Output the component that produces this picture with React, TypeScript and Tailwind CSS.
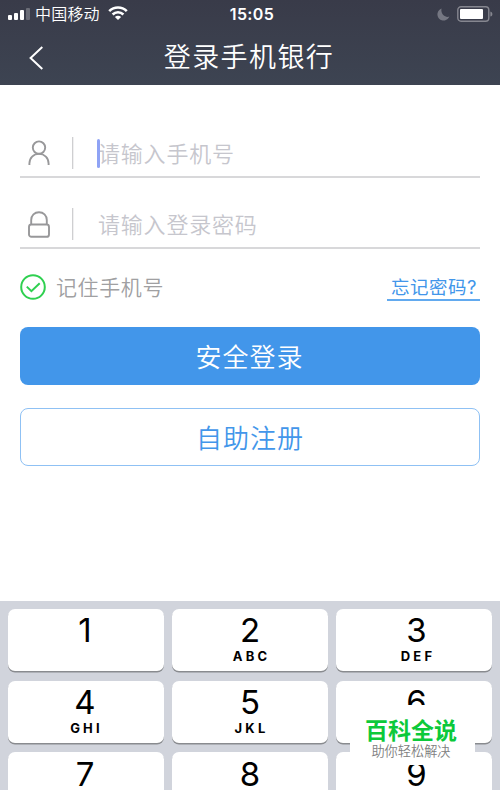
import { clsx } from 'clsx';

// The last row is cut by the bottom of the screen, so it only shows digits
const KEYS = [
    { digit: '1', letters: '' },
    { digit: '2', letters: 'ABC' },
    { digit: '3', letters: 'DEF' },
    { digit: '4', letters: 'GHI' },
    { digit: '5', letters: 'JKL' },
    { digit: '6', letters: '' },
    { digit: '7', letters: '' },
    { digit: '8', letters: '' },
    { digit: '9', letters: '' },
];

function StatusBar() {
    return (
        <div className="grid h-7 grid-cols-3 items-center pl-2 pr-[7px]">
            <div className="flex items-center">
                <svg width="22" height="12" viewBox="0 0 22 12" fill="white">
                    <rect x="0" y="7" width="4" height="5" rx="1" />
                    <rect x="6" y="5" width="4" height="7" rx="1" />
                    <rect x="12" y="2" width="4" height="10" rx="1" />
                    <rect x="18" y="0" width="4" height="12" rx="1" opacity="0.25" />
                </svg>
                <span className="-mt-0.5 ml-[5px] text-[16px] leading-7 font-[350] tracking-[0.2px]">中国移动</span>
                <svg className="-mt-0.5 ml-2" width="20" height="14" viewBox="0 0 20 14" fill="none" stroke="white" strokeWidth="2.6">
                    <path d="M1.2 5.1C6.2 0.2 13.8 0.2 18.8 5.1" />
                    <path d="M4.6 8.5C7.7 5.5 12.3 5.5 15.4 8.5" />
                    <path d="M6.9 10.9C8.7 9.2 11.3 9.2 13.1 10.9L10 14Z" fill="white" stroke="none" />
                </svg>
            </div>
            <span className="pl-[3px] text-center font-['Inter'] text-[16px] font-semibold tracking-[0.4px]">15:05</span>
            <div className="flex items-center justify-end">
                <svg width="13" height="13" viewBox="0 0 13 13" fill="#757782">
                    <path d="M4.6 0.5A6.2 6.2 0 1 0 12.4 8.6C8.2 10.2 3.2 5.8 4.6 0.5Z" />
                </svg>
                <svg className="ml-[7px]" width="36" height="16" viewBox="0 0 36 16">
                    <rect x="0.8" y="0.8" width="31" height="14.4" rx="3.2" fill="none" stroke="#85868f" strokeWidth="1.4" />
                    <rect x="3" y="3" width="23" height="10" rx="1" fill="white" />
                    <path d="M33.4 5.4C36 6.3 36 9.7 33.4 10.6Z" fill="#85868f" />
                </svg>
            </div>
        </div>
    );
}

function Field({ icon, placeholder, focused }: { icon: React.ReactNode; placeholder: string; focused?: boolean }) {
    return (
        <div className="flex h-12 items-center border-b-2 border-[#d8d8da]">
            <div className="flex w-[38px] justify-center">{icon}</div>
            <div className="ml-3.5 h-8 w-px bg-[#cfcfd1] shadow-[1px_0_0_#f0f0f1]" />
            <div className="relative ml-[25px] text-[22px] leading-8 font-[350] tracking-[0.8px] text-[#c6c6cd]">
                <span className="-mt-0.5 block">{placeholder}</span>
                {focused && <span className="absolute -left-px top-px h-[29px] w-[2.5px] rounded-full bg-[#8fa3f5]" />}
            </div>
        </div>
    );
}

export default function App() {
    return (
        <div className="relative flex h-[790px] w-[500px] flex-col overflow-hidden bg-white font-['Noto_Sans_CJK_SC','Noto_Sans',sans-serif]">
            <header className="h-[85px] shrink-0 bg-linear-to-b from-[#393b49] to-[#3d4452] text-white">
                <StatusBar />
                <div className="grid h-[57px] grid-cols-[60px_1fr_60px] items-center">
                    <svg className="ml-[29px] mt-0.5" width="15" height="24" viewBox="0 0 15 24" fill="none" stroke="white" strokeWidth="2">
                        <path d="M13.3 1L1.6 12L13.3 23" />
                    </svg>
                    <h1 className="-mt-0.5 pr-0.5 text-center text-[27px] leading-[57px] font-[350] tracking-[1.4px]">登录手机银行</h1>
                </div>
            </header>

            <main className="flex flex-1 flex-col px-5 pt-[45px]">
                <Field
                    focused
                    placeholder="请输入手机号"
                    icon={
                        <svg width="22" height="26" viewBox="0 0 22 26" fill="none" stroke="#98989a" strokeWidth="1.9">
                            <circle cx="11" cy="7.6" r="6.2" />
                            <path d="M1.4 25V23.6C1.4 17.8 5.5 13.9 11 13.9S20.6 17.8 20.6 23.6V25" />
                        </svg>
                    }
                />
                <div className="mt-[23px]">
                    <Field
                        placeholder="请输入登录密码"
                        icon={
                            <svg width="22" height="27" viewBox="0 0 22 27" fill="none" stroke="#98989a" strokeWidth="1.9">
                                <rect x="1" y="13.5" width="20" height="12.3" rx="2.4" />
                                <path d="M3.2 13.5V9C3.2 4.3 6.6 1.2 11 1.2S18.8 4.3 18.8 9V13.5" />
                            </svg>
                        }
                    />
                </div>

                <div className="mt-[22px] flex h-8 items-center justify-between">
                    <label className="flex items-center text-[21px] leading-8 font-[350] tracking-[0.6px] text-[#a0a0a2]">
                        <svg className="mr-2.5" width="26" height="26" viewBox="0 0 26 26" fill="none" stroke="#2fd050" strokeWidth="2">
                            <circle cx="13" cy="13" r="11.8" />
                            <path d="M6.8 12.6L11.4 17.2L19.7 9.2" />
                        </svg>
                        <span className="-mt-0.5">记住手机号</span>
                    </label>
                    <a className="h-[27px] border-b-2 border-[#62aaef] pl-1 pr-[3px] text-[18.5px] leading-6 tracking-[0.5px] text-[#4296ea]">
                        忘记密码<span className="font-['Inter']">?</span>
                    </a>
                </div>

                <button className="mt-6 h-[58px] shrink-0 rounded-[8px] bg-[#4296ea] pr-px text-[26px] leading-[58px] font-[350] tracking-[1px] text-white">
                    安全登录
                </button>
                <button className="mt-[23px] h-[58px] shrink-0 rounded-[8px] border-[1.5px] border-[#8fc1f4] text-[26px] leading-[56px] font-[350] tracking-[1px] text-[#4296ea]">
                    自助注册
                </button>
            </main>

            <div className="grid h-[189px] shrink-0 auto-rows-[62px] grid-cols-3 gap-x-2 gap-y-[9.5px] bg-[#d1d4dc] px-2 pt-2 font-['Inter'] text-black">
                {KEYS.map(({ digit, letters }, i) => (
                    <div
                        key={digit}
                        className={clsx(
                            'flex flex-col items-center rounded-[7px] bg-white shadow-[0_1.5px_0_#898b8f]',
                            i < 3 ? 'pt-[5px]' : 'pt-[5.5px]',
                            i % 3 === 0 && 'pr-0.5',
                            i % 3 === 2 && 'pl-[5px]'
                        )}
                    >
                        <span className="text-[33px] leading-8">{digit}</span>
                        {letters && (
                            <span className="mt-0.5 pl-[3px] text-[13px] leading-4 font-bold tracking-[3.2px]">{letters}</span>
                        )}
                    </div>
                ))}
            </div>

            {/* site badge over the keypad */}
            <div className="absolute left-[350px] top-[705px] flex h-[60px] w-[125px] flex-col items-center bg-white">
                <span className="mt-[11px] mr-[3px] text-[23px] leading-[26px] font-bold text-[#0cc93a]">百科全说</span>
                <span className="mt-px mr-[3px] text-[13.2px] leading-4 font-[350] text-[#808080]">助你轻松解决</span>
            </div>
        </div>
    );
}
